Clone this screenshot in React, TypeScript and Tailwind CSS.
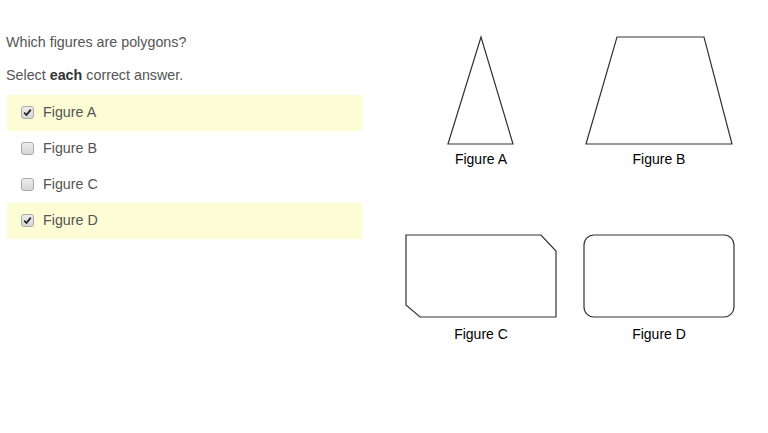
import React from 'react';

const options = [
  { label: 'Figure A', checked: true },
  { label: 'Figure B', checked: false },
  { label: 'Figure C', checked: false },
  { label: 'Figure D', checked: true },
];

function Check({ checked }: { checked: boolean }) {
  return (
    <span className="flex h-[13px] w-[13px] items-center justify-center rounded-[3px] border border-[#a9a9a9] bg-gradient-to-b from-[#ededed] to-[#d6d6d6]">
      {checked && (
        <svg width="9" height="9" viewBox="0 0 9 9">
          <path d="M1.2 4.6 L3.5 7 L7.8 1.6" fill="none" stroke="#222" strokeWidth="1.8" />
        </svg>
      )}
    </span>
  );
}

export default function App() {
  return (
    <div className="flex h-[433px] w-[768px] bg-white" style={{ fontFamily: '"Liberation Sans", Arial, sans-serif' }}>
      <div className="w-[362px] pl-[6px] pt-[32px]">
        <p className="text-[14.3px] leading-[20px] text-[#555]">Which figures are polygons?</p>
        <p className="mt-[13px] text-[14.3px] leading-[20px] text-[#555]">
          Select <b className="text-[#333]">each</b> correct answer.
        </p>
        <div className="mt-[10px] ml-[1px]">
          {options.map((o) => (
            <div
              key={o.label}
              className={`flex h-[36px] items-center gap-[9px] pb-[1px] pl-[14px] ${o.checked ? 'bg-[#fcfdd4]' : ''}`}
            >
              <Check checked={o.checked} />
              <span className="text-[14.3px] text-[#555]">{o.label}</span>
            </div>
          ))}
        </div>
      </div>

      <div className="ml-[30px] grid w-[356px] grid-cols-2 grid-rows-[190px_auto] pt-[35px] text-[14px] leading-[16px] text-black">
        <div className="flex flex-col items-center">
          <svg width="178" height="112" viewBox="0 0 178 112">
            <polygon points="89,2 56,109 121,109" fill="none" stroke="#333" strokeWidth="1.2" />
          </svg>
          <span className="mt-[4px]">Figure A</span>
        </div>
        <div className="flex flex-col items-center">
          <svg width="178" height="112" viewBox="0 0 178 112">
            <polygon points="47,2 134,2 162,109 16,109" fill="none" stroke="#333" strokeWidth="1.2" />
          </svg>
          <span className="mt-[4px]">Figure B</span>
        </div>
        <div className="flex flex-col items-center">
          <svg width="178" height="100" viewBox="0 0 178 100">
            <polygon points="14,10 149,10 164,26 164,92 28,92 14,80" fill="none" stroke="#333" strokeWidth="1.2" />
          </svg>
          <span className="mt-[1px]">Figure C</span>
        </div>
        <div className="flex flex-col items-center">
          <svg width="178" height="100" viewBox="0 0 178 100">
            <rect x="14" y="10" width="150" height="82" rx="10" fill="none" stroke="#333" strokeWidth="1.2" />
          </svg>
          <span className="mt-[1px]">Figure D</span>
        </div>
      </div>
    </div>
  );
}
